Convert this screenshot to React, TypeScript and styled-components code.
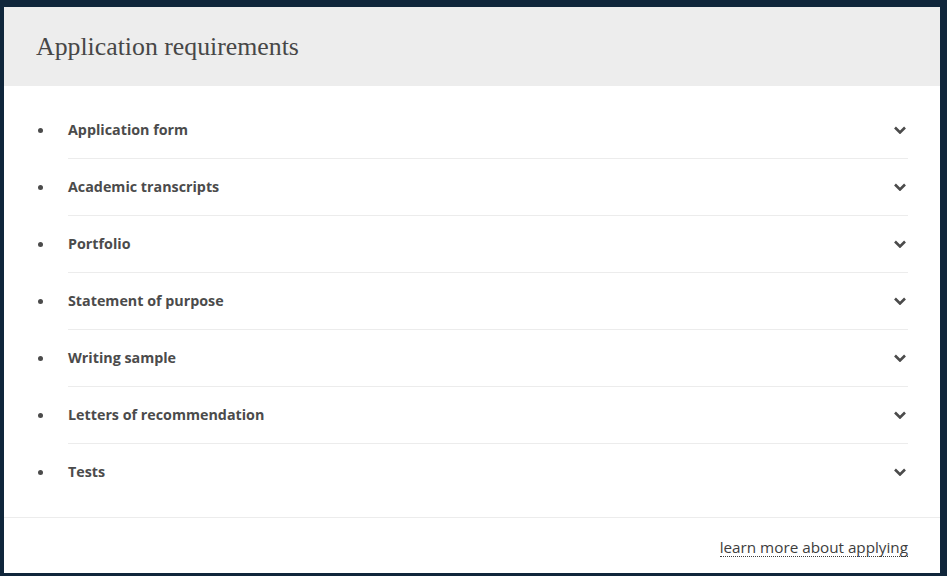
import React from 'react';
import styled, { createGlobalStyle } from 'styled-components';

/* GLOBAL */
const GlobalStyle = createGlobalStyle`
  html, body {
    margin: 0;
    padding: 0;
    background: #10263b;
  }
  * {
    box-sizing: border-box;
  }
`;

/* STYLES */
const Page = styled.div`
  width: 947px;
  height: 576px;
  padding: 7px 7px 3px 4px;
`;

const Card = styled.section`
  background: #ffffff;
  height: 100%;
  display: flex;
  flex-direction: column;
`;

const Header = styled.header`
  height: 79px;
  background: #ededed;
  display: flex;
  align-items: center;
  padding-left: 32px;
`;

const Title = styled.h2`
  margin: 0;
  font-family: "Liberation Serif", serif;
  font-weight: 400;
  font-size: 25.8px;
  color: #474747;
  padding-top: 1px;
`;

const List = styled.ul`
  list-style: none;
  margin: 0;
  padding: 16px 32px 16px 64px;
`;

const Item = styled.li<{ last?: boolean }>`
  position: relative;
  height: 57px;
  display: flex;
  align-items: center;
  justify-content: space-between;
  border-bottom: 1px solid ${(p) => (p.last ? 'transparent' : '#ececec')};
  padding-bottom: 1px;
  cursor: pointer;

  &::before {
    content: '';
    position: absolute;
    left: -30px;
    top: 26px;
    width: 5px;
    height: 5px;
    border-radius: 50%;
    background: #4b4b4b;
  }
`;

const Label = styled.span`
  font-family: "Open Sans", "Liberation Sans", sans-serif;
  font-weight: 700;
  font-size: 14.3px;
  color: #4b4b4b;
`;

const Chevron = styled.svg`
  width: 12px;
  height: 8px;
  margin-right: 2px;
  flex-shrink: 0;
`;

const Footer = styled.footer`
  border-top: 1px solid #ececec;
  flex: 1;
  display: flex;
  align-items: center;
  justify-content: flex-end;
  padding: 0 32px 0 0;
`;

const MoreLink = styled.a`
  font-family: "Open Sans", "Liberation Sans", sans-serif;
  font-size: 15.25px;
  color: #3d3d3d;
  text-decoration: none;
  border-bottom: 1px dotted #3d3d3d;
  line-height: 17px;
  margin-top: 4px;
`;

const items = [
  'Application form',
  'Academic transcripts',
  'Portfolio',
  'Statement of purpose',
  'Writing sample',
  'Letters of recommendation',
  'Tests',
];

/* COMPONENT */
export default function App() {
  return (
    <>
      <GlobalStyle />
      <Page>
        <Card>
          <Header>
            <Title>Application requirements</Title>
          </Header>
          <List>
            {items.map((name, i) => (
              <Item key={name} last={i === items.length - 1}>
                <Label>{name}</Label>
                <Chevron viewBox="0 0 12 8">
                  <path d="M1 1.5 L6 6.5 L11 1.5" fill="none" stroke="#4b4b4b" strokeWidth="2.6" />
                </Chevron>
              </Item>
            ))}
          </List>
          <Footer>
            <MoreLink href="#">learn more about applying</MoreLink>
          </Footer>
        </Card>
      </Page>
    </>
  );
}
